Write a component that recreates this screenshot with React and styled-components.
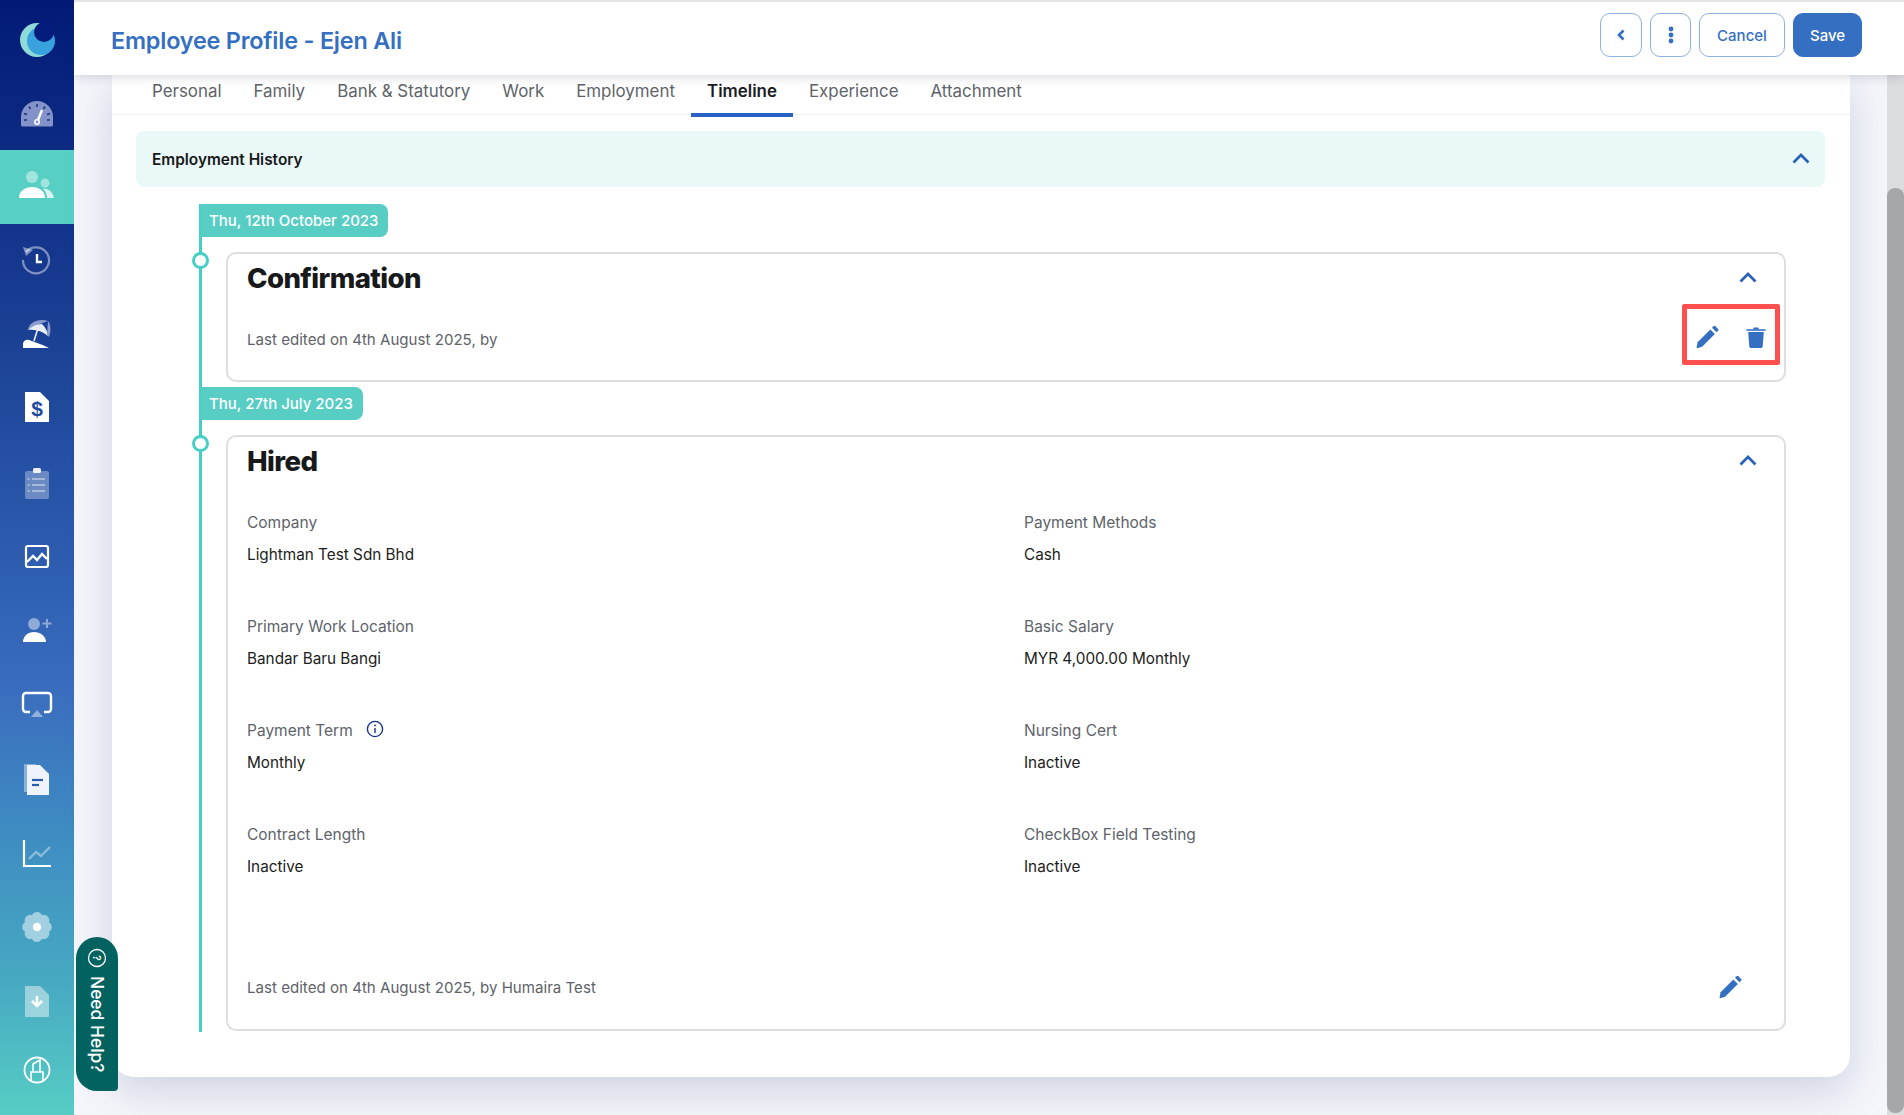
import styled, { createGlobalStyle } from "styled-components";

const FONT = `Inter, "Open Sans", "Liberation Sans", sans-serif`;
const BLUE = "#356fc2";
const TEAL = "#57cdc4";

const GlobalStyle = createGlobalStyle`
  html, body {
    margin: 0;
    height: 100%;
    overflow: hidden;
    font-family: ${FONT};
  }
  * { box-sizing: border-box; }
`;

const Shell = styled.div`
  position: relative;
  display: flex;
  height: 100vh;
  background: #f5f6fb;
  overflow: hidden;
`;

const Sidebar = styled.nav`
  flex: 0 0 74px;
  display: flex;
  flex-direction: column;
  padding-top: 2px;
  background: linear-gradient(180deg, #021a76 0%, #1c4396 32%, #2f5fb2 52%, #3a6dbe 62%, #3f8fc2 76%, #47a9c2 88%, #56cdc4 100%);
`;

const NavItem = styled.div`
  flex: 0 0 74px;
  display: flex;
  align-items: center;
  justify-content: center;
  background: ${(p) => (p.$active ? "#57cfc5" : "transparent")};

  &:last-child {
    padding-bottom: 10px;
  }
`;

const Main = styled.div`
  flex: 1;
  min-width: 0;
  display: flex;
  flex-direction: column;
`;

const Header = styled.header`
  position: relative;
  z-index: 3;
  flex: 0 0 75px;
  display: flex;
  align-items: center;
  justify-content: space-between;
  padding: 0 42px 0 37px;
  background: #fff;
  border-top: 2px solid #e4e4e6;
  box-shadow: 0 2px 10px rgba(40, 50, 80, 0.18);
`;

const PageTitle = styled.h1`
  margin: 4px 0 0;
  font-size: 23.4px;
  font-weight: 600;
  letter-spacing: -0.2px;
  color: ${BLUE};
`;

const Actions = styled.div`
  display: flex;
  gap: 8px;
  margin-bottom: 7px;
`;

const OutlineButton = styled.button`
  height: 44px;
  width: ${(p) => p.$width};
  display: flex;
  align-items: center;
  justify-content: center;
  padding: 0;
  font-family: ${FONT};
  font-size: 15px;
  font-weight: 500;
  color: ${BLUE};
  background: #fff;
  border: 1.5px solid #8fb0e3;
  border-radius: 10px;
`;

const SaveButton = styled(OutlineButton)`
  color: #fff;
  background: ${BLUE};
  border-color: ${BLUE};
`;

const Body = styled.div`
  flex: 1;
  min-height: 0;
  display: flex;
`;

const Content = styled.main`
  flex: 1;
  min-width: 0;
  padding: 0 37px 0 38px;
`;

const Scrollbar = styled.div`
  flex: 0 0 17px;
  padding-top: 113px;
  background: #dcdde0;
`;

const ScrollThumb = styled.div`
  height: 925px;
  border-radius: 8px;
  background: #a6a7ab;
`;

const ProfileCard = styled.section`
  height: 1002px;
  background: #fff;
  border-radius: 0 0 22px 22px;
  box-shadow: 0 14px 40px rgba(70, 85, 130, 0.22);
`;

const Tabs = styled.div`
  display: flex;
  height: 40px;
  padding-left: 24px;
  border-bottom: 1px solid #f1f2f4;
`;

const Tab = styled.div`
  padding: 6px 16px 0;
  height: 42px;
  font-size: 16.9px;
  font-weight: ${(p) => (p.$active ? 600 : 400)};
  color: ${(p) => (p.$active ? "#1c1c1f" : "#5e6369")};
  border-bottom: ${(p) => (p.$active ? "4px solid #2762c4" : "none")};
`;

const AccordionBar = styled.div`
  display: flex;
  align-items: center;
  justify-content: space-between;
  height: 56px;
  margin: 16px 25px 0 24px;
  padding: 0 15px 0 16px;
  background: #eaf9f8;
  border-radius: 8px;
  font-size: 15.4px;
  font-weight: 600;
  color: #17181a;
`;

const Timeline = styled.div`
  height: 828px;
  margin: 17px 64px 0 87px;
  border-left: 3px solid #45cfc6;
`;

const DateTag = styled.div`
  display: inline-flex;
  align-items: center;
  height: 33px;
  margin-left: -1px;
  padding: 0 10px 0 8px;
  background: ${TEAL};
  border-radius: 0 8px 8px 0;
  font-size: 15px;
  font-weight: 500;
  color: #fff;
`;

const EventCard = styled.article`
  position: relative;
  display: flex;
  flex-direction: column;
  height: ${(p) => p.$height};
  margin: ${(p) => p.$margin};
  padding: 0 19px;
  border: 2px solid #dedede;
  border-radius: 10px;
`;

const TimelineDot = styled.span`
  position: absolute;
  left: -36px;
  top: -2px;
  width: 17px;
  height: 17px;
  background: #fff;
  border: 3.5px solid #45cfc6;
  border-radius: 50%;
`;

const EventHeader = styled.div`
  display: flex;
  align-items: center;
  justify-content: space-between;
  height: 47px;
  padding-right: 8px;
`;

const EventTitle = styled.h2`
  margin: 0;
  font-size: 27.6px;
  font-weight: 800;
  letter-spacing: -0.6px;
  color: #18191b;
`;

const EventFooter = styled.div`
  display: flex;
  align-items: center;
  justify-content: space-between;
  margin-top: ${(p) => p.$top};
  font-size: 15.1px;
  color: #5e6369;
`;

const FooterIcon = styled.div`
  display: flex;
  padding-right: 22px;
`;

const Highlight = styled.div`
  position: absolute;
  right: 4px;
  top: 50px;
  width: 98px;
  height: 61px;
  border: 5px solid #ff5050;
  border-radius: 2px;
`;

const HighlightIcons = styled.div`
  position: absolute;
  right: 17px;
  top: 70px;
  display: flex;
  align-items: center;
  gap: 25px;
`;

const FieldGrid = styled.div`
  display: grid;
  grid-template-columns: 777px 1fr;
  grid-auto-rows: 104px;
  margin-top: 29px;
`;

const Field = styled.div`
  display: flex;
  flex-direction: column;
  gap: 13px;
`;

const FieldLabel = styled.div`
  display: flex;
  align-items: center;
  gap: 13px;
  height: 19px;
  font-size: 15.5px;
  color: #5e6369;
`;

const InfoWrap = styled.span`
  display: flex;
  margin-top: -3px;
`;

const FieldValue = styled.div`
  height: 19px;
  font-size: 15.3px;
  color: #1c1d20;
`;

const HelpTab = styled.div`
  position: absolute;
  left: 76px;
  top: 937px;
  z-index: 4;
  display: flex;
  flex-direction: column;
  align-items: center;
  gap: 8px;
  width: 42px;
  height: 154px;
  padding-top: 11px;
  background: #01625f;
  border-radius: 21px 21px 4px 21px;
  font-size: 17.4px;
  font-weight: 500;
  color: #fff;
`;

const HelpLabel = styled.span`
  writing-mode: vertical-rl;
  white-space: nowrap;
`;

const Chevron = () => (
  <svg width="18" height="18" viewBox="0 0 18 18" fill="none">
    <path d="M1.5 12.500 9 5l7.500 7.500" stroke="#2a62b8" strokeWidth="2.700" />
  </svg>
);

const Pencil = () => (
  <svg width="26" height="26" viewBox="0 0 26 26" fill={BLUE}>
    <path d="M2.500 24 3.600 18.200 16.400 5.400l4.500 4.500L8.100 22.800 4 24Z" />
    <path d="M18 3.800l1.600-1.600a1.300 1.300 0 0 1 1.800 0l2.700 2.700a1.300 1.300 0 0 1 0 1.800l-1.600 1.600Z" />
  </svg>
);

const Trash = () => (
  <svg width="22" height="24" viewBox="0 0 22 24" fill={BLUE}>
    <path d="M1.500 4.200h19v1.600h-19Z" />
    <path d="M8 4.200 8.800 2.400h4.400l.8 1.800Z" />
    <path d="M3.200 7h15.600l-1.100 14.600A1.600 1.600 0 0 1 16.100 23H5.900a1.600 1.600 0 0 1-1.600-1.400Z" />
  </svg>
);

const Info = () => (
  <svg width="18" height="18" viewBox="0 0 18 18" fill="none">
    <circle cx="9" cy="9" r="7.600" stroke="#12308f" strokeWidth="1.400" />
    <path d="M9 8v5" stroke="#12308f" strokeWidth="1.400" />
    <circle cx="9" cy="5.400" r="0.900" fill="#12308f" />
  </svg>
);

const W = "#ffffff";
const FADE = "rgba(255,255,255,0.45)";

const NavIcon = ({ children }) => (
  <svg width="40" height="40" viewBox="0 0 40 40" fill="none">
    {children}
  </svg>
);

const navIcons = [
  <NavIcon>
    <circle cx="20" cy="21" r="17" fill="#8fdbd8" />
    <circle cx="24" cy="22" r="14" fill="#37a2de" />
    <circle cx="27" cy="13" r="10" fill="#041d7c" />
  </NavIcon>,
  <NavIcon>
    <path d="M4 32v-8a16 16 0 0 1 32 0v8a1.500 1.500 0 0 1-1.500 1.500h-29A1.500 1.500 0 0 1 4 32Z" fill="#8392c8" />
    <path d="M20 11v3M12 13.500l1.500 2.500M28 13.500l-1.500 2.500M7 20.500l3 1M33 20.500l-3 1M7 27h3M30 27h3" stroke="#1a3486" strokeWidth="1.500" />
    <path d="M25 17l-4 10" stroke={W} strokeWidth="2.400" />
    <circle cx="20" cy="29" r="2.200" stroke={W} strokeWidth="1.500" />
  </NavIcon>,
  <NavIcon>
    <circle cx="15" cy="10" r="6" fill={FADE} />
    <circle cx="28" cy="16" r="4.500" fill={FADE} />
    <path d="M2 31c0-7 6-11 13-11s13 4 13 11Z" fill={W} />
    <path d="M26 22c5-1 10 3 11 9h-7c0-3-1-7-4-9Z" fill="rgba(255,255,255,0.8)" />
  </NavIcon>,
  <NavIcon>
    <path d="M9 11a13 13 0 1 1-3 8" stroke={FADE} strokeWidth="2.200" />
    <path d="M6 6l10 3-7 6Z" fill={FADE} />
    <path d="M20 13v8h5" stroke={W} strokeWidth="2.400" />
  </NavIcon>,
  <NavIcon>
    <path d="M11 15C12 7 22 3 31 6l-8 3Z" fill="#8a9cce" />
    <path d="M11 15c4-4 9-6 14-6 3 3 5 6 6 12-6-5-13-7-20-6Z" fill="#e8ecf8" />
    <path d="M31 6c3 4 3 10 1 16l-2-2Z" fill="#8a9cce" />
    <path d="M21 13l-4 13" stroke="#e8ecf8" strokeWidth="1.600" />
    <path d="M6 33v-4c0-3 3-5 6-4 5 2 12 4 20 8Z" fill={W} />
  </NavIcon>,
  <NavIcon>
    <path d="M8 3h15l9 9v21H8Z" fill={W} />
    <text x="20" y="27" textAnchor="middle" fontFamily="Liberation Sans, sans-serif" fontWeight="700" fontSize="21" fill="#1f4aa0">$</text>
  </NavIcon>,
  <NavIcon>
    <rect x="8" y="8" width="24" height="28" rx="2" fill="rgba(255,255,255,0.32)" />
    <rect x="16" y="5" width="8" height="5" rx="1.500" fill="rgba(255,255,255,0.9)" />
    <path d="M15 16h13M15 22h13M15 28h13M10.500 16h2M10.500 22h2M10.500 28h2" stroke="rgba(255,255,255,0.4)" strokeWidth="2" />
  </NavIcon>,
  <NavIcon>
    <rect x="9" y="9" width="22" height="21" rx="2" stroke={W} strokeWidth="2.200" />
    <path d="M10 25l6-6 4 4 5-6 5 5" stroke={W} strokeWidth="2.400" />
  </NavIcon>,
  <NavIcon>
    <circle cx="17" cy="13" r="6" fill={FADE} />
    <path d="M6 31c0-6 5-10 11-10s12 4 12 10Z" fill={W} />
    <path d="M30 8v9M25.500 12.500h9" stroke={FADE} strokeWidth="2" />
  </NavIcon>,
  <NavIcon>
    <path d="M13 27H9a3 3 0 0 1-3-3V11a3 3 0 0 1 3-3h22a3 3 0 0 1 3 3v13a3 3 0 0 1-3 3h-4" stroke={W} strokeWidth="2.400" />
    <path d="M14 32l6-7 6 7Z" fill={FADE} />
  </NavIcon>,
  <NavIcon>
    <path d="M7 5h12v28H7Z" fill="rgba(255,255,255,0.4)" />
    <path d="M10 6h13l9 9v21H10Z" fill="#eff3fb" />
    <path d="M15 21h11" stroke="#2a5cb2" strokeWidth="2.200" />
    <path d="M15 26h7" stroke="#2a5cb2" strokeWidth="2.200" />
  </NavIcon>,
  <NavIcon>
    <path d="M7 7v26h27" stroke={W} strokeWidth="2.200" />
    <path d="M12 26l7-7 5 4 9-9" stroke="rgba(255,255,255,0.4)" strokeWidth="2.400" />
  </NavIcon>,
  <NavIcon>
    <g fill="rgba(255,255,255,0.5)">
      <path d="M20 5a5.500 5.500 0 0 1 5 3.200 5.500 5.500 0 0 1 7 7 5.500 5.500 0 0 1 0 9.600 5.500 5.500 0 0 1-7 7 5.500 5.500 0 0 1-10 0 5.500 5.500 0 0 1-7-7 5.500 5.500 0 0 1 0-9.600 5.500 5.500 0 0 1 7-7A5.500 5.500 0 0 1 20 5Z" />
    </g>
    <circle cx="20" cy="20" r="4.200" fill={W} />
  </NavIcon>,
  <NavIcon>
    <path d="M8 5h15l9 9v21a1 1 0 0 1-1 1H8Z" fill={FADE} />
    <path d="M20 15v9M15 20l5 5 5-5" stroke={W} strokeWidth="2.600" />
  </NavIcon>,
  <NavIcon>
    <circle cx="20" cy="20" r="12.500" stroke={W} strokeWidth="1.800" />
    <path d="M14 32V22h12v10" stroke={W} strokeWidth="1.600" />
    <path d="M16 22v-8l7-4v12" stroke={W} strokeWidth="1.600" />
  </NavIcon>,
];

const tabs = ["Personal", "Family", "Bank & Statutory", "Work", "Employment", "Timeline", "Experience", "Attachment"];

const hiredFields = [
  ["Company", "Lightman Test Sdn Bhd"],
  ["Payment Methods", "Cash"],
  ["Primary Work Location", "Bandar Baru Bangi"],
  ["Basic Salary", "MYR 4,000.00 Monthly"],
  ["Payment Term", "Monthly", true],
  ["Nursing Cert", "Inactive"],
  ["Contract Length", "Inactive"],
  ["CheckBox Field Testing", "Inactive"],
];

export default function App() {
  return (
    <Shell>
      <GlobalStyle />
      <Sidebar>
        {navIcons.map((icon, i) => (
          <NavItem key={i} $active={i === 2}>
            {icon}
          </NavItem>
        ))}
      </Sidebar>
      <Main>
        <Header>
          <PageTitle>Employee Profile - Ejen Ali</PageTitle>
          <Actions>
            <OutlineButton $width="42px">
              <svg width="14" height="14" viewBox="0 0 14 14" fill="none">
                <path d="M9.500 2.500 5 7l4.500 4.500" stroke={BLUE} strokeWidth="2.600" />
              </svg>
            </OutlineButton>
            <OutlineButton $width="41px">
              <svg width="6" height="18" viewBox="0 0 6 18" fill={BLUE}>
                <circle cx="3" cy="3" r="2.400" />
                <circle cx="3" cy="9" r="2.400" />
                <circle cx="3" cy="15" r="2.400" />
              </svg>
            </OutlineButton>
            <OutlineButton $width="86px">Cancel</OutlineButton>
            <SaveButton $width="69px">Save</SaveButton>
          </Actions>
        </Header>
        <Body>
          <Content>
            <ProfileCard>
              <Tabs>
                {tabs.map((tab) => (
                  <Tab key={tab} $active={tab === "Timeline"}>
                    {tab}
                  </Tab>
                ))}
              </Tabs>
              <AccordionBar>
                Employment History
                <Chevron />
              </AccordionBar>
              <Timeline>
                <DateTag>Thu, 12th October 2023</DateTag>
                <EventCard $height="130px" $margin="15px 0 5px 24px">
                  <TimelineDot />
                  <EventHeader>
                    <EventTitle>Confirmation</EventTitle>
                    <Chevron />
                  </EventHeader>
                  <EventFooter $top="29px">Last edited on 4th August 2025, by</EventFooter>
                  <Highlight />
                  <HighlightIcons>
                    <Pencil />
                    <Trash />
                  </HighlightIcons>
                </EventCard>
                <DateTag>Thu, 27th July 2023</DateTag>
                <EventCard $height="596px" $margin="15px 0 0 24px">
                  <TimelineDot />
                  <EventHeader>
                    <EventTitle>Hired</EventTitle>
                    <Chevron />
                  </EventHeader>
                  <FieldGrid>
                    {hiredFields.map(([label, value, info]) => (
                      <Field key={label}>
                        <FieldLabel>
                          {label}
                          {info && (
                            <InfoWrap>
                              <Info />
                            </InfoWrap>
                          )}
                        </FieldLabel>
                        <FieldValue>{value}</FieldValue>
                      </Field>
                    ))}
                  </FieldGrid>
                  <EventFooter $top="45px">
                    Last edited on 4th August 2025, by Humaira Test
                    <FooterIcon>
                      <Pencil />
                    </FooterIcon>
                  </EventFooter>
                </EventCard>
              </Timeline>
            </ProfileCard>
          </Content>
          <Scrollbar>
            <ScrollThumb />
          </Scrollbar>
        </Body>
      </Main>
      <HelpTab>
        <svg width="20" height="20" viewBox="0 0 20 20" fill="none">
          <circle cx="10" cy="10" r="8.500" stroke="#fff" strokeWidth="1.300" />
          <text x="10" y="14" textAnchor="middle" fontSize="11" fill="#fff" transform="rotate(90 10 10)">?</text>
        </svg>
        <HelpLabel>Need Help?</HelpLabel>
      </HelpTab>
    </Shell>
  );
}
